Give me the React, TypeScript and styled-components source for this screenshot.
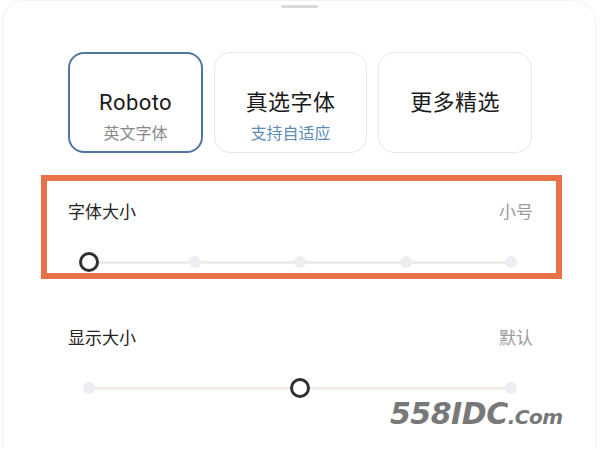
import React from 'react';
import styled, { createGlobalStyle } from 'styled-components';

const GlobalStyle = createGlobalStyle`
	html, body {
		margin: 0;
		padding: 0;
		background: #ffffff;
	}
	body {
		font-family: Roboto, "Noto Sans CJK SC", sans-serif;
		color: #1f1f1f;
	}
`;

const Sheet = styled.div`
	position: relative;
	width: 594px;
	height: 449px;
	margin: 0 2px;
	box-sizing: border-box;
	border: 1px solid #f3f3f3;
	border-bottom: none;
	border-radius: 22px 22px 0 0;
	overflow: hidden;
	display: flex;
	flex-direction: column;
	align-items: center;
`;

const Handle = styled.div`
	width: 37px;
	height: 3px;
	margin-top: 4px;
	border-radius: 2px;
	background: #d9d9d9;
`;

const CardRow = styled.div`
	display: flex;
	gap: 11px;
	margin-top: 44px;
	margin-left: 2px;
`;

const Card = styled.button<{ $width: number; $selected?: boolean }>`
	width: ${p => p.$width}px;
	height: 101px;
	box-sizing: border-box;
	display: flex;
	flex-direction: column;
	align-items: center;
	padding: ${p => (p.$selected ? 34 : 35)}px 0 0 0;
	background: #ffffff;
	border: ${p => (p.$selected ? '2px solid #4f76a3' : '1px solid #e7e7e7')};
	border-radius: 16px;
	font-family: inherit;
	cursor: pointer;
`;

const CardTitle = styled.div`
	font-size: 22px;
	line-height: 30px;
	color: #1a1a1a;
	letter-spacing: 0.4px;
`;

const CardSub = styled.div<{ $accent?: boolean }>`
	font-size: 16px;
	line-height: 20px;
	margin-top: 6px;
	color: ${p => (p.$accent ? '#5b8bb8' : '#8a8a8a')};
`;

const Section = styled.div<{ $highlight?: boolean }>`
	width: 521px;
	box-sizing: border-box;
	margin-top: 22px;
	margin-left: 5px;
	padding: 19px 23px 0 21px;
	height: 104px;
	border: 6px solid ${p => (p.$highlight ? '#e9714a' : 'transparent')};
	display: flex;
	flex-direction: column;
`;

const SectionHead = styled.div`
	display: flex;
	justify-content: space-between;
	align-items: center;
	height: 24px;
`;

const Label = styled.span`
	font-size: 17px;
	line-height: 24px;
	color: #222222;
`;

const Value = styled.span`
	font-size: 17px;
	line-height: 24px;
	color: #9a9a9a;
`;

const SliderBox = styled.div`
	position: relative;
	height: 20px;
	margin: 28px 22px 0 21px;
	display: flex;
	align-items: center;
`;

const Track = styled.div`
	width: 100%;
	height: 3px;
	border-radius: 2px;
	background: #efece9;
`;

const Dot = styled.span`
	position: absolute;
	top: 50%;
	width: 12px;
	height: 12px;
	border-radius: 50%;
	background: #eceef2;
	transform: translate(-50%, -50%);
`;

const Thumb = styled.span`
	position: absolute;
	top: 50%;
	width: 20px;
	height: 20px;
	box-sizing: border-box;
	border-radius: 50%;
	border: 3.5px solid #2f2f2f;
	background: #ffffff;
	transform: translate(-50%, -50%);
`;

const Watermark = styled.div`
	position: absolute;
	left: 387px;
	top: 395px;
	font-family: "DejaVu Sans", sans-serif;
	font-weight: bold;
	font-style: italic;
	color: #787878;
	white-space: nowrap;
	letter-spacing: -0.5px;
`;

const MarkBig = styled.span`
	font-size: 30px;
`;

const MarkSmall = styled.span`
	font-size: 20px;
`;

type SliderProps = { dots: number[]; value: number };

const Slider = ({ dots, value }: SliderProps) => (
	<SliderBox>
		<Track />
		{dots.map(d => (
			<Dot key={d} style={{ left: `${d * 100}%` }} />
		))}
		<Thumb style={{ left: `${value * 100}%` }} />
	</SliderBox>
);

const fonts = [
	{ title: 'Roboto', sub: '英文字体', width: 135, selected: true },
	{ title: '真选字体', sub: '支持自适应', width: 153, accent: true },
	{ title: '更多精选', width: 154 },
];

const App = () => (
	<>
		<GlobalStyle />
		<Sheet>
			<Handle />
			<CardRow>
				{fonts.map(f => (
					<Card key={f.title} $width={f.width} $selected={f.selected}>
						<CardTitle>{f.title}</CardTitle>
						{f.sub && <CardSub $accent={f.accent}>{f.sub}</CardSub>}
					</Card>
				))}
			</CardRow>
			<Section $highlight>
				<SectionHead>
					<Label>字体大小</Label>
					<Value>小号</Value>
				</SectionHead>
				<Slider dots={[0.25, 0.5, 0.75, 1]} value={0} />
			</Section>
			<Section>
				<SectionHead>
					<Label>显示大小</Label>
					<Value>默认</Value>
				</SectionHead>
				<Slider dots={[0, 1]} value={0.5} />
			</Section>
			<Watermark>
				<MarkBig>558IDC</MarkBig>
				<MarkSmall>.Com</MarkSmall>
			</Watermark>
		</Sheet>
	</>
);

export default App;
